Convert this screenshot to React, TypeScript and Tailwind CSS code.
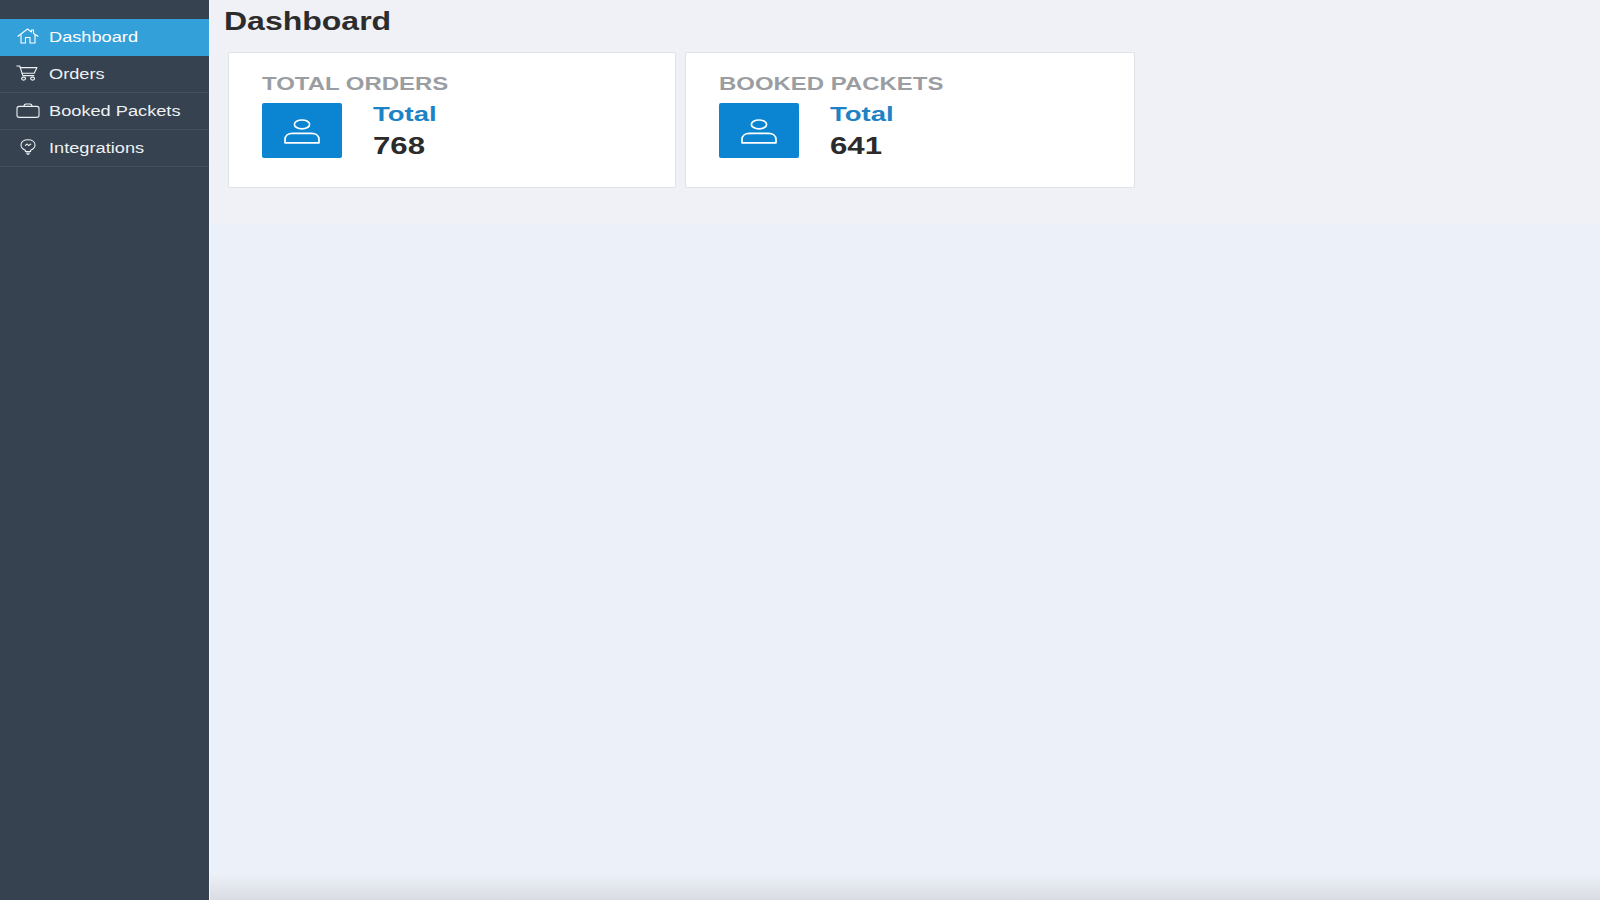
const sans = "font-['Liberation_Sans',Arial,sans-serif]";

function HomeIcon() {
  return (
    <svg width="22" height="16" viewBox="0 0 22 16" fill="none" stroke="currentColor" strokeWidth="1.1" strokeLinejoin="round" strokeLinecap="round">
      <path d="M1 8.2 10.5 1 14.5 4V2h2v3.6L21 8.2" />
      <path d="M4 7v8h4.5V9.5h4.5V15H18V7" />
    </svg>
  );
}
function CartIcon() {
  return (
    <svg width="22" height="16" viewBox="0 0 22 16" fill="none" stroke="currentColor" strokeWidth="1.1" strokeLinejoin="round" strokeLinecap="round">
      <path d="M0.8 1h3l3 9.6h11" />
      <path d="M4.2 2.6H21l-2.8 5.6H6" />
      <ellipse cx="7.6" cy="13.6" rx="2" ry="1.5" />
      <ellipse cx="16.6" cy="13.6" rx="2" ry="1.5" />
    </svg>
  );
}
function CaseIcon() {
  return (
    <svg width="24" height="15" viewBox="0 0 24 15" fill="none" stroke="currentColor" strokeWidth="1.1" strokeLinejoin="round">
      <rect x="1" y="3.4" width="22" height="11" rx="2.2" />
      <path d="M8 3.4c0-1.6.6-2.4 2-2.4h4c1.4 0 2 .8 2 2.4" />
    </svg>
  );
}
function BulbIcon() {
  return (
    <svg width="16" height="16" viewBox="0 0 16 16" fill="none" stroke="currentColor" strokeWidth="1.05" strokeLinejoin="round" strokeLinecap="round">
      <path d="M5.4 11.2C2.6 10 1 8.2 1 5.9 1 2.8 4 .8 8 .8s7 2 7 5.1c0 2.3-1.6 4.1-4.4 5.3v1.2H5.4z" />
      <path d="M5.4 6.4 7.2 5l1.5 1.6L10.8 5" />
      <path d="M6.2 14h3.6M7.2 15.2h1.6" />
    </svg>
  );
}
function UserIcon() {
  return (
    <svg width="36" height="25" viewBox="0 0 36 25" fill="none" stroke="currentColor" strokeWidth="1.7" strokeLinejoin="round">
      <ellipse cx="18" cy="5.4" rx="7.6" ry="4.4" />
      <path d="M1 23.8v-3.2c0-4 3.4-6.2 7.4-6.2h19.2c4 0 7.4 2.2 7.4 6.2v3.2z" />
    </svg>
  );
}

const items = [
  { label: "Dashboard", icon: <HomeIcon />, active: true, pad: "pl-[17px]" },
  { label: "Orders", icon: <CartIcon />, active: false, pad: "pl-[16px]" },
  { label: "Booked Packets", icon: <CaseIcon />, active: false, pad: "pl-[16px]" },
  { label: "Integrations", icon: <BulbIcon />, active: false, pad: "pl-[20px]" },
];

function Card({ title, value, width }: { title: string; value: string; width: string }) {
  return (
    <div className={`${width} h-[136px] bg-white border border-[#dfe2e6] rounded-[2px] pl-[33px] pt-[20px]`}>
      <div className="text-[#9a9da1] text-[18px] leading-[23px] font-bold origin-left scale-x-[1.33] whitespace-nowrap">{title}</div>
      <div className="flex mt-[7px]">
        <div className="w-[80px] h-[55px] bg-[#0b85d1] rounded-[2px] text-white flex items-center justify-center pt-[1px]">
          <UserIcon />
        </div>
        <div className="ml-[31px] -mt-[3px]">
          <div className="text-[#1d83c6] text-[21px] leading-[28px] font-bold origin-left scale-x-[1.31]">Total</div>
          <div className="text-[#2b2b2b] text-[24px] leading-[30px] mt-[3px] font-bold origin-left scale-x-[1.3]">{value}</div>
        </div>
      </div>
    </div>
  );
}

export default function App() {
  return (
    <div className={`${sans} flex h-[900px] w-[1600px] overflow-hidden bg-[#ecf0f8]`}>
      <aside className="w-[209px] shrink-0 bg-[#36424f] pt-[19px] text-white">
        {items.map((it) => (
          <div
            key={it.label}
            className={`flex items-center h-[37px] border-b ${it.active ? "bg-[#34a0d9] border-[#34a0d9]" : "border-[#424e5b] text-[#eef1f3]"}`}
          >
            <span className={`w-[49px] ${it.pad} flex items-center -mt-[2px]`}>{it.icon}</span>
            <span className="text-[14px] leading-[18px] font-medium origin-left scale-x-[1.3] whitespace-nowrap -mt-[1px]">{it.label}</span>
          </div>
        ))}
      </aside>
      <main className="flex-1 flex flex-col border-l border-[#f4f6fa]">
        <section className="h-[224px] bg-[#eff1f6] pl-[14px]">
          <h1 className="text-[25px] leading-[42px] font-bold text-[#2c2c2c] origin-left scale-x-[1.28]">Dashboard</h1>
          <div className="flex gap-[9px] mt-[10px] pl-[4px]">
            <Card title="TOTAL ORDERS" value="768" width="w-[448px]" />
            <Card title="BOOKED PACKETS" value="641" width="w-[450px]" />
          </div>
        </section>
        <div className="flex-1" />
        <div className="h-[26px] bg-gradient-to-b from-[#ecf0f8] to-[#d9dce2]" />
      </main>
    </div>
  );
}
